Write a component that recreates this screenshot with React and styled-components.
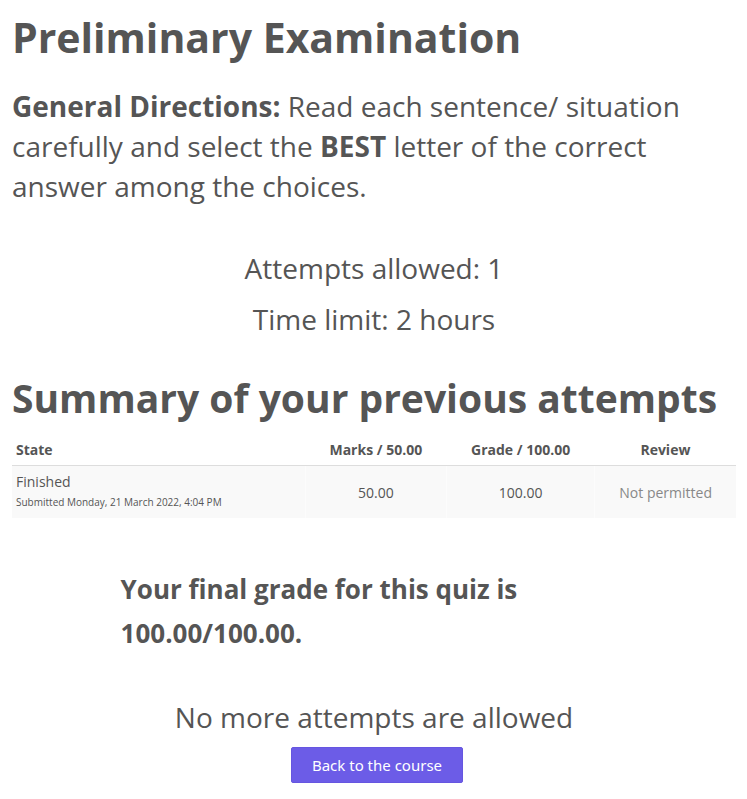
import React from "react";
import styled, { createGlobalStyle } from "styled-components";

const GlobalStyle = createGlobalStyle`
  * { box-sizing: border-box; }
  body {
    margin: 0;
    background: #fff;
    color: #555;
    font-family: "Open Sans", sans-serif;
  }
`;

const Page = styled.main`
  padding: 11px 11px 16px 12px;
`;

const Title = styled.h1`
  margin: 0 0 23px;
  font-size: 41px;
  line-height: 52px;
  font-weight: 700;
`;

const SectionTitle = styled.h2`
  margin: 0 0 11px;
  font-size: 39px;
  line-height: 52px;
  font-weight: 700;
`;

const Directions = styled.p`
  margin: 0;
  font-size: 28px;
  line-height: 40px;
`;

const QuizInfo = styled.section`
  margin: 42px 0 33px;
  text-align: center;
`;

const InfoLine = styled.p`
  margin: 0 0 11px;
  font-size: 28px;
  line-height: 40px;
`;

const Attempts = styled.table`
  width: 100%;
  table-layout: fixed;
  border-collapse: collapse;
  font-size: 14px;
  line-height: 21px;
`;

const Column = styled.col`
  width: ${(p) => p.$width};
`;

const HeadCell = styled.th`
  padding: 4px 4px 5px;
  text-align: ${(p) => p.$align || "center"};
  font-weight: 700;
  border-bottom: 1px solid #ddd;
`;

const Cell = styled.td`
  padding: 5px 4px;
  background: #f9f9f9;
  text-align: ${(p) => p.$align || "center"};
  color: ${(p) => (p.$muted ? "#888" : "inherit")};

  & + & {
    border-left: 1px solid #fcfcfc;
  }
`;

const Submitted = styled.span`
  display: block;
  font-size: 10px;
`;

const FinalGrade = styled.h3`
  margin: 49px 15% 42px;
  font-size: 26px;
  line-height: 44px;
  font-weight: 700;
`;

const Closing = styled.section`
  text-align: center;
`;

const Notice = styled.p`
  margin: 0 0 10px;
  font-size: 28px;
  line-height: 40px;
`;

const CourseButton = styled.button`
  margin-left: 6px;
  padding: 6px 20px;
  border: 1px solid #6656e0;
  border-radius: 2px;
  background: #6c5ce7;
  color: #fff;
  font: 15px/22px "Noto Sans", sans-serif;
  cursor: pointer;
`;

export default function App() {
  return (
    <>
      <GlobalStyle />
      <Page>
        <Title>Preliminary Examination</Title>
        <Directions>
          <strong>General Directions:</strong> Read each sentence/ situation
          carefully and select the <strong>BEST</strong> letter of the correct
          answer among the choices.
        </Directions>
        <QuizInfo>
          <InfoLine>Attempts allowed: 1</InfoLine>
          <InfoLine>Time limit: 2 hours</InfoLine>
        </QuizInfo>
        <SectionTitle>Summary of your previous attempts</SectionTitle>
        <Attempts>
          <colgroup>
            <Column $width="40.5%" />
            <Column $width="19.5%" />
            <Column $width="20.5%" />
            <Column $width="19.5%" />
          </colgroup>
          <thead>
            <tr>
              <HeadCell scope="col" $align="left">State</HeadCell>
              <HeadCell scope="col">Marks / 50.00</HeadCell>
              <HeadCell scope="col">Grade / 100.00</HeadCell>
              <HeadCell scope="col">Review</HeadCell>
            </tr>
          </thead>
          <tbody>
            <tr>
              <Cell $align="left">
                Finished
                <Submitted>Submitted Monday, 21 March 2022, 4:04 PM</Submitted>
              </Cell>
              <Cell>50.00</Cell>
              <Cell>100.00</Cell>
              <Cell $muted>Not permitted</Cell>
            </tr>
          </tbody>
        </Attempts>
        <FinalGrade>Your final grade for this quiz is 100.00/100.00.</FinalGrade>
        <Closing>
          <Notice>No more attempts are allowed</Notice>
          <CourseButton type="button">Back to the course</CourseButton>
        </Closing>
      </Page>
    </>
  );
}
